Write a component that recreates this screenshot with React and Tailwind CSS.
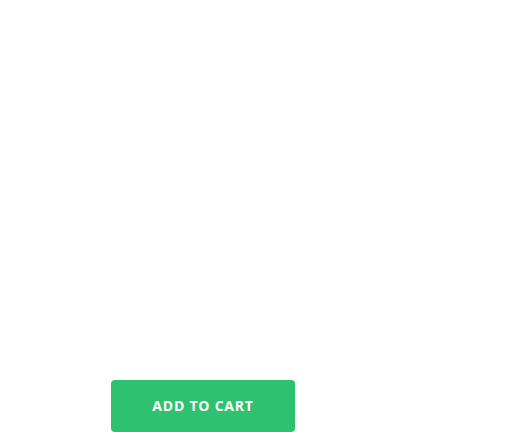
export default function App() {
  return (
    <div className="min-h-screen bg-white pt-[380px] pl-[111px]">
      {/* Product action */}
      <button
        type="button"
        className="w-[184px] h-[52px] rounded-[4px] bg-[#2ec270] text-white text-[14px] font-bold tracking-[0.055em] flex items-center justify-center pb-[1px]"
        style={{ fontFamily: '"Open Sans", "Liberation Sans", sans-serif' }}
      >
        ADD TO CART
      </button>
    </div>
  )
}
